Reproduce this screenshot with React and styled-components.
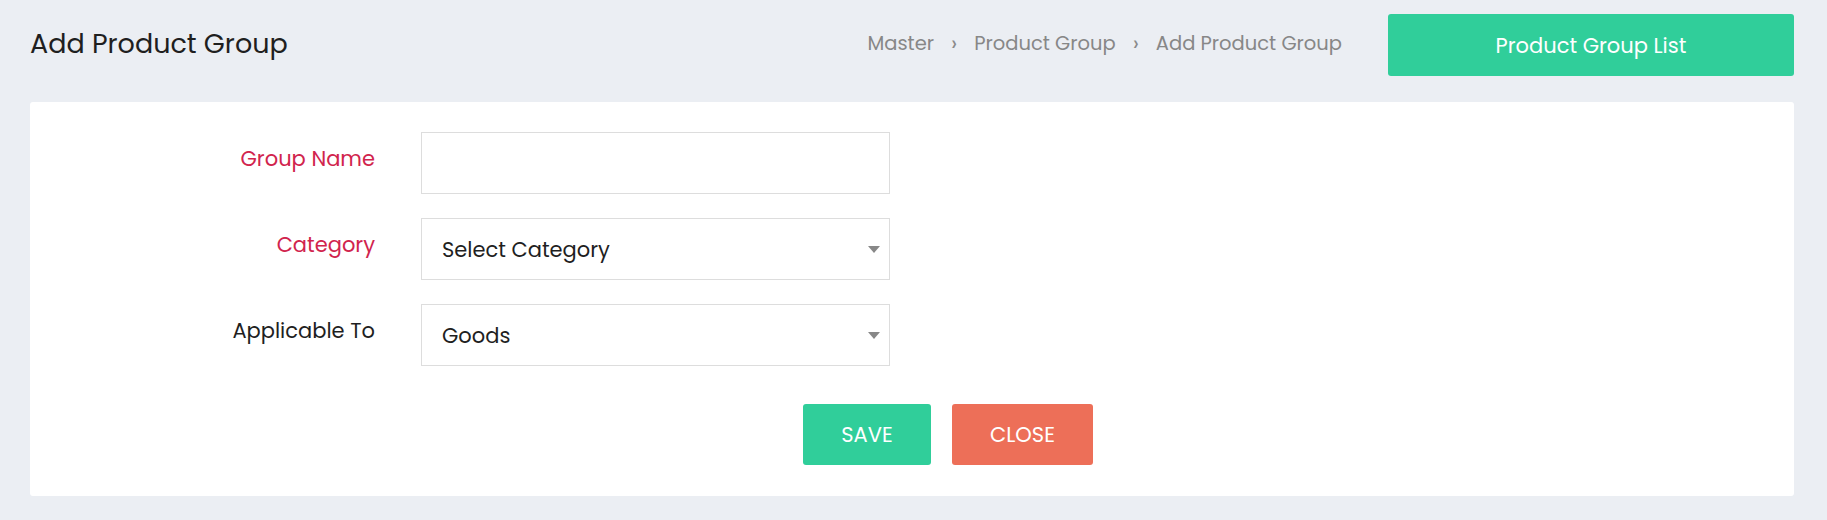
import React from "react";
import styled, { createGlobalStyle } from "styled-components";

const GlobalStyle = createGlobalStyle`
  body {
    margin: 0;
    background: #ebeef3;
    font-family: Poppins, Inter, "Noto Sans", sans-serif;
  }
`;

class App extends React.Component {
  render() {
    return (
      <Page>
        <GlobalStyle />
        <Header>
          <Title>Add Product Group</Title>
          <Crumbs>
            <Crumb>Master</Crumb>
            <Sep>›</Sep>
            <Crumb>Product Group</Crumb>
            <Sep>›</Sep>
            <Crumb>Add Product Group</Crumb>
          </Crumbs>
          <ListButton>Product Group List</ListButton>
        </Header>
        <Card>
          <Row>
            <Label required>Group Name</Label>
            <Input type="text" />
          </Row>
          <Row>
            <Label required>Category</Label>
            <Select defaultValue="">
              <option value="">Select Category</option>
            </Select>
          </Row>
          <Row>
            <Label>Applicable To</Label>
            <Select defaultValue="goods">
              <option value="goods">Goods</option>
              <option value="services">Services</option>
            </Select>
          </Row>
          <Actions>
            <Button color="#30ce9a" width="128px">SAVE</Button>
            <Button color="#ed6f58" width="141px">CLOSE</Button>
          </Actions>
        </Card>
      </Page>
    );
  }
}

export default App;

const Page = styled.div`
  padding: 0 33px 0 30px;
`;

const Header = styled.div`
  display: flex;
  align-items: center;
  padding-top: 14px;
  margin-bottom: 26px;
`;

const Title = styled.h1`
  flex: 1;
  margin: 0;
  font-size: 27px;
  font-weight: 400;
  color: #1f1f1f;
  position: relative;
  top: -1px;
`;

const Crumbs = styled.div`
  display: flex;
  align-items: center;
  gap: 17px;
  margin-right: 46px;
  font-size: 19.5px;
  color: #878787;
  position: relative;
  top: -2px;
`;

const Crumb = styled.span``;

const Sep = styled.span`
  font-size: 22px;
  color: #8a8a8a;
`;

const ListButton = styled.button`
  width: 406px;
  height: 62px;
  border: none;
  border-radius: 3px;
  background: #30ce9a;
  color: #fff;
  font-family: inherit;
  font-size: 21px;
`;

const Card = styled.div`
  background: #fff;
  border-radius: 3px;
  padding: 30px 0 31px;
  display: flex;
  flex-direction: column;
  gap: 24px;
`;

const Row = styled.div`
  display: grid;
  grid-template-columns: 345px 469px;
  column-gap: 46px;
  align-items: start;
`;

const Label = styled.label`
  text-align: right;
  padding-top: 14px;
  line-height: 26px;
  font-size: 21px;
  color: ${(p) => (p.required ? "#d1244d" : "#1f1f1f")};
`;

const Input = styled.input`
  box-sizing: border-box;
  height: 62px;
  border: 1px solid #dddddd;
  padding: 0 20px;
  font-family: inherit;
  font-size: 21px;
  outline: none;
`;

const Select = styled.select`
  box-sizing: border-box;
  height: 62px;
  border: 1px solid #dddddd;
  border-radius: 0;
  padding: 0 20px;
  font-family: inherit;
  font-size: 21px;
  color: #1f1f1f;
  background: #fff
    url("data:image/svg+xml;utf8,<svg xmlns='http://www.w3.org/2000/svg' width='12' height='7'><path d='M0 0h12L6 7z' fill='%23888'/></svg>")
    no-repeat right 9px center;
  appearance: none;
  outline: none;
`;

const Actions = styled.div`
  display: flex;
  justify-content: center;
  gap: 21px;
  padding-left: 72px;
  margin-top: 14px;
`;

const Button = styled.button`
  width: ${(p) => p.width};
  height: 61px;
  border: none;
  border-radius: 3px;
  background: ${(p) => p.color};
  color: #fff;
  font-family: inherit;
  font-size: 21px;
`;
